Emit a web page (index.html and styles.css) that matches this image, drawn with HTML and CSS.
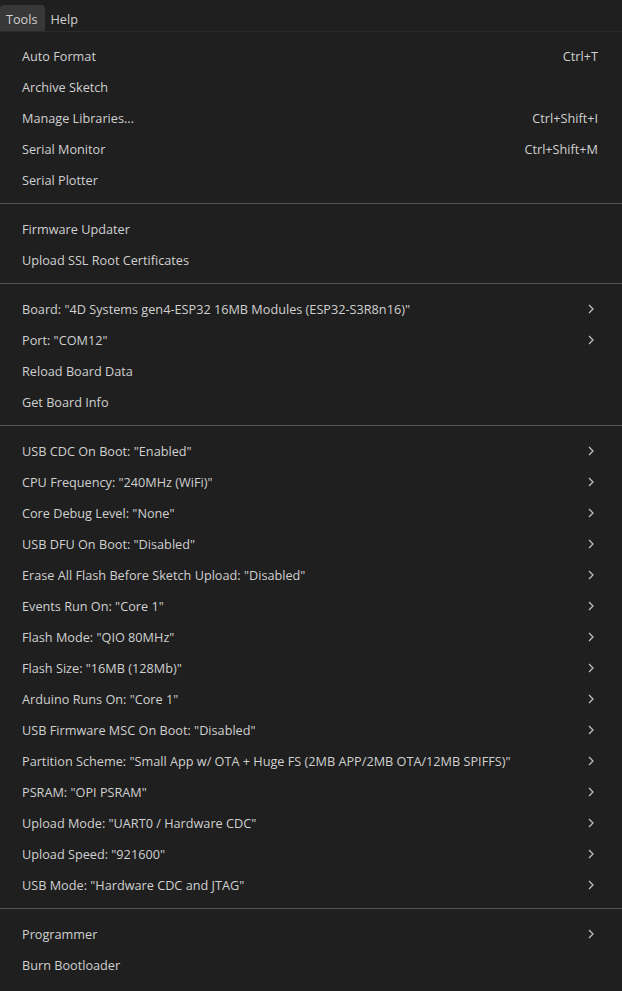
FILE: index.html
```html
<!DOCTYPE html>
<html>
<head>
<meta charset="utf-8">
<link rel="stylesheet" href="styles.css">
</head>
<body>
<div class="menubar">
  <div class="mb-item active">Tools</div>
  <div class="mb-item">Help</div>
</div>
<div class="menu">
  <div class="row"><span class="label">Auto Format</span><span class="key">Ctrl+T</span></div>
  <div class="row"><span class="label">Archive Sketch</span></div>
  <div class="row"><span class="label">Manage Libraries...</span><span class="key">Ctrl+Shift+I</span></div>
  <div class="row"><span class="label">Serial Monitor</span><span class="key">Ctrl+Shift+M</span></div>
  <div class="row"><span class="label">Serial Plotter</span></div>
  <div class="sep"></div>
  <div class="row"><span class="label">Firmware Updater</span></div>
  <div class="row"><span class="label">Upload SSL Root Certificates</span></div>
  <div class="sep"></div>
  <div class="row sub"><span class="label">Board: "4D Systems gen4-ESP32 16MB Modules (ESP32-S3R8n16)"</span><svg class="chev" viewBox="0 0 6 10"><polyline points="1,1 5,5 1,9"/></svg></div>
  <div class="row sub"><span class="label">Port: "COM12"</span><svg class="chev" viewBox="0 0 6 10"><polyline points="1,1 5,5 1,9"/></svg></div>
  <div class="row"><span class="label">Reload Board Data</span></div>
  <div class="row"><span class="label">Get Board Info</span></div>
  <div class="sep"></div>
  <div class="row sub"><span class="label">USB CDC On Boot: "Enabled"</span><svg class="chev" viewBox="0 0 6 10"><polyline points="1,1 5,5 1,9"/></svg></div>
  <div class="row sub"><span class="label">CPU Frequency: "240MHz (WiFi)"</span><svg class="chev" viewBox="0 0 6 10"><polyline points="1,1 5,5 1,9"/></svg></div>
  <div class="row sub"><span class="label">Core Debug Level: "None"</span><svg class="chev" viewBox="0 0 6 10"><polyline points="1,1 5,5 1,9"/></svg></div>
  <div class="row sub"><span class="label">USB DFU On Boot: "Disabled"</span><svg class="chev" viewBox="0 0 6 10"><polyline points="1,1 5,5 1,9"/></svg></div>
  <div class="row sub"><span class="label">Erase All Flash Before Sketch Upload: "Disabled"</span><svg class="chev" viewBox="0 0 6 10"><polyline points="1,1 5,5 1,9"/></svg></div>
  <div class="row sub"><span class="label">Events Run On: "Core 1"</span><svg class="chev" viewBox="0 0 6 10"><polyline points="1,1 5,5 1,9"/></svg></div>
  <div class="row sub"><span class="label">Flash Mode: "QIO 80MHz"</span><svg class="chev" viewBox="0 0 6 10"><polyline points="1,1 5,5 1,9"/></svg></div>
  <div class="row sub"><span class="label">Flash Size: "16MB (128Mb)"</span><svg class="chev" viewBox="0 0 6 10"><polyline points="1,1 5,5 1,9"/></svg></div>
  <div class="row sub"><span class="label">Arduino Runs On: "Core 1"</span><svg class="chev" viewBox="0 0 6 10"><polyline points="1,1 5,5 1,9"/></svg></div>
  <div class="row sub"><span class="label">USB Firmware MSC On Boot: "Disabled"</span><svg class="chev" viewBox="0 0 6 10"><polyline points="1,1 5,5 1,9"/></svg></div>
  <div class="row sub"><span class="label">Partition Scheme: "Small App w/ OTA + Huge FS (2MB APP/2MB OTA/12MB SPIFFS)"</span><svg class="chev" viewBox="0 0 6 10"><polyline points="1,1 5,5 1,9"/></svg></div>
  <div class="row sub"><span class="label">PSRAM: "OPI PSRAM"</span><svg class="chev" viewBox="0 0 6 10"><polyline points="1,1 5,5 1,9"/></svg></div>
  <div class="row sub"><span class="label">Upload Mode: "UART0 / Hardware CDC"</span><svg class="chev" viewBox="0 0 6 10"><polyline points="1,1 5,5 1,9"/></svg></div>
  <div class="row sub"><span class="label">Upload Speed: "921600"</span><svg class="chev" viewBox="0 0 6 10"><polyline points="1,1 5,5 1,9"/></svg></div>
  <div class="row sub"><span class="label">USB Mode: "Hardware CDC and JTAG"</span><svg class="chev" viewBox="0 0 6 10"><polyline points="1,1 5,5 1,9"/></svg></div>
  <div class="sep"></div>
  <div class="row sub"><span class="label">Programmer</span><svg class="chev" viewBox="0 0 6 10"><polyline points="1,1 5,5 1,9"/></svg></div>
  <div class="row"><span class="label">Burn Bootloader</span></div>
</div>
</body>
</html>
```
FILE: styles.css
```css
html, body {
  margin: 0;
  padding: 0;
  background: #1f1f1f;
  width: 622px;
  height: 991px;
  overflow: hidden;
  font-family: "Open Sans", "Noto Sans", sans-serif;
  font-size: 12.7px;
  color: #d0d0d0;
}
.menubar {
  height: 31px;
  display: flex;
  align-items: flex-end;
  border-bottom: 1px solid #2b2b2b;
  background: #1f1f1f;
}
.mb-item {
  height: 26px;
  line-height: 28px;
  padding: 0 7px 0 6px;
  border-radius: 4px 4px 0 0;
}
.mb-item.active {
  background: #383838;
}
.menu {
  background: #1f1f1f;
  padding-top: 8px;
  border-bottom-left-radius: 6px;
  border-bottom-right-radius: 6px;
}
.row {
  height: 31px;
  display: flex;
  align-items: center;
  justify-content: space-between;
  padding: 0 24px 0 22px;
}
.key {
  color: #d0d0d0;
}
.chev {
  width: 6px;
  height: 10px;
  margin-right: 4px;
  fill: none;
  stroke: #bdbdbd;
  stroke-width: 1.3;
}
.sep {
  height: 1px;
  background: #555555;
  margin: 8px 0 9px;
}
```
